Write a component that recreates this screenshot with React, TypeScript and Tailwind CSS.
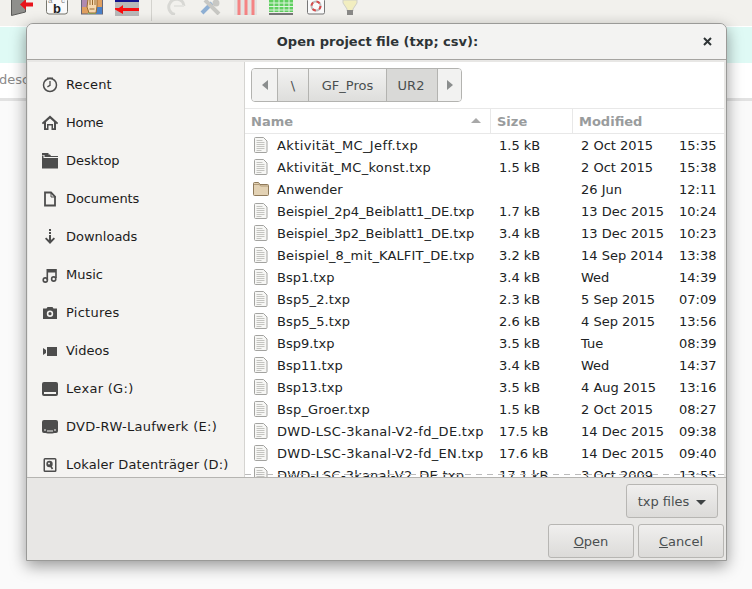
import { ReactNode } from "react";

const files = [
  ["Aktivität_MC_Jeff.txp", "1.5 kB", "2 Oct 2015", "15:35", "tracking-[0.38px]"],
  ["Aktivität_MC_konst.txp", "1.5 kB", "2 Oct 2015", "15:38", "tracking-[0.27px]"],
  ["Anwender", "", "26 Jun", "12:11", ""],
  ["Beispiel_2p4_Beiblatt1_DE.txp", "1.7 kB", "13 Dec 2015", "10:24", ""],
  ["Beispiel_3p2_Beiblatt1_DE.txp", "3.4 kB", "13 Dec 2015", "10:23", ""],
  ["Beispiel_8_mit_KALFIT_DE.txp", "3.2 kB", "14 Sep 2014", "13:38", "tracking-[0.14px]"],
  ["Bsp1.txp", "3.4 kB", "Wed", "14:39", ""],
  ["Bsp5_2.txp", "2.3 kB", "5 Sep 2015", "07:09", "tracking-[0.1px]"],
  ["Bsp5_5.txp", "2.6 kB", "4 Sep 2015", "13:56", "tracking-[0.1px]"],
  ["Bsp9.txp", "3.5 kB", "Tue", "08:39", ""],
  ["Bsp11.txp", "3.4 kB", "Wed", "14:37", ""],
  ["Bsp13.txp", "3.5 kB", "4 Aug 2015", "13:16", ""],
  ["Bsp_Groer.txp", "1.5 kB", "2 Oct 2015", "08:27", "tracking-[0.15px]"],
  ["DWD-LSC-3kanal-V2-fd_DE.txp", "17.5 kB", "14 Dec 2015", "09:38", "tracking-[0.3px]"],
  ["DWD-LSC-3kanal-V2-fd_EN.txp", "17.6 kB", "14 Dec 2015", "09:40", "tracking-[0.3px]"],
  ["DWD-LSC-3kanal-V2_DE.txp", "17.1 kB", "3 Oct 2009", "13:55", "tracking-[0.25px]"],
];

const Glyph = ({ children }: { children: ReactNode }) => (
  <svg width="16" height="16" viewBox="0 0 16 16" fill="#4d4d4d" className="shrink-0">
    {children}
  </svg>
);

const places: [string, string, ReactNode][] = [
  ["Recent", "tracking-[0.15px]", <Glyph><circle cx="8" cy="8" r="6.500" fill="none" stroke="#4d4d4d" strokeWidth="1.500" /><path d="M8 4v4.300l-2.600 1.600" fill="none" stroke="#4d4d4d" strokeWidth="1.300" /><path d="M5 .5h6v1.500H5z" /></Glyph>],
  ["Home", "tracking-[-0.3px]", <Glyph><path fillRule="evenodd" d="M8 .5-.2 8l1.200 1.300L2 8.400V15h4.500v-4.500h3V15H14V8.400l1 .9L16.200 8zM4 7l4-3.600L12 7v6.300h-1V9H5v4.300H4z" /></Glyph>],
  ["Desktop", "", <Glyph><path d="M0 0h6.500v2H0zM0 2.500h1.500V5H16v10.500H0z" /><path d="M2.500 1.500H8l1 1.500h7v1H2.500z" /></Glyph>],
  ["Documents", "tracking-[-0.1px]", <Glyph><path d="M3 1.500h6l4 4v9H3z" fill="none" stroke="#4d4d4d" strokeWidth="1.800" /><path d="M9 1v5h5" fill="none" stroke="#4d4d4d" strokeWidth="1" /></Glyph>],
  ["Downloads", "", <Glyph><path d="M7 0h2v2H7zM7 3h2v2H7zM7 6h2v5l2.800-2.500 1.200 1.300L8 15 3 9.800l1.200-1.300L7 11z" /></Glyph>],
  ["Music", "", <Glyph><path d="M4.500 2h10.300v9h-1.600V5.500H6.100V13H4.500z" /><circle cx="3.300" cy="13" r="2.100" fill="none" stroke="#4d4d4d" strokeWidth="1.600" /><circle cx="11.700" cy="12" r="2.100" fill="none" stroke="#4d4d4d" strokeWidth="1.600" /></Glyph>],
  ["Pictures", "tracking-[0.25px]", <Glyph><path fillRule="evenodd" d="M5.500 2h5l1 1.500H15V14H1V3.500h3.500zM8 5.500a3.200 3.200 0 1 0 0 6.400 3.200 3.200 0 0 0 0-6.400z" /><circle cx="8" cy="8.700" r="1.600" /></Glyph>],
  ["Videos", "", <Glyph><path d="M5 4h10v9H5zM1 5l3 2v3l-3 2z" /></Glyph>],
  ["Lexar (G:)", "tracking-[0.3px]", <Glyph><path fillRule="evenodd" d="M2 1h12a2 2 0 0 1 2 2v10a2 2 0 0 1-2 2H2a2 2 0 0 1-2-2V3a2 2 0 0 1 2-2zM2 11v2h12v-2z" /></Glyph>],
  ["DVD-RW-Laufwerk (E:)", "tracking-[0.3px]", <Glyph><path d="M2 1h12a2 2 0 0 1 2 2v9a2 2 0 0 1-2 2h-1.500a8 3 0 0 1-9 0H2a2 2 0 0 1-2-2V3a2 2 0 0 1 2-2z" /><path d="M2 10.500h2v1H2zM12 10.500h2v1h-2zM5 11.500h6v1H5z" fill="#f4f3f1" /></Glyph>],
  ["Lokaler Datenträger (D:)", "tracking-[0.13px]", <Glyph><path fillRule="evenodd" d="M3 1h10a1.500 1.500 0 0 1 1.500 1.500v11A1.500 1.500 0 0 1 13 15H3a1.500 1.500 0 0 1-1.500-1.500v-11A1.500 1.500 0 0 1 3 1zm0 1.500v11h10v-11z" /><circle cx="7.500" cy="7" r="3.200" /><path d="M8 8l2.500 4" stroke="#4d4d4d" strokeWidth="1.600" /><circle cx="7" cy="6.500" r="1" fill="#f4f3f1" /></Glyph>],
];

function FileIcon() {
  return (
    <svg width="16" height="16" viewBox="0 0 16 16" className="shrink-0">
      <path d="M2.500.5h8l3.500 3.500v10.500a1 1 0 0 1-1 1h-10.500a1 1 0 0 1-1-1v-13a1 1 0 0 1 1-1z" fill="#f7f7f5" stroke="#a3a3a0" />
      <path d="M3.500 3.500h6M3.500 5.500h8M3.500 7.500h8M3.500 9.500h8M3.500 11.500h8M3.500 13.500h5" stroke="#c4c4c0" />
    </svg>
  );
}

function FolderIcon() {
  return (
    <svg width="16" height="16" viewBox="0 0 16 16" className="shrink-0">
      <path d="M.5 2.500a1 1 0 0 1 1-1h4l1.500 2h7.500a1 1 0 0 1 1 1v9a1 1 0 0 1-1 1h-13a1 1 0 0 1-1-1z" fill="#e3d2b4" stroke="#8f7a5a" />
      <path d="M1 3.500h5.500l1 1.500H15" fill="none" stroke="#b09a78" />
    </svg>
  );
}

function Toolbar() {
  return (
    <div className="flex h-[26px] items-start overflow-hidden bg-[#f2f1ed] pl-[11px]">
      <svg width="23" height="16" viewBox="0 0 23 16" className="mr-[12px]">
        <path d="M.5-1h14v13l-14 3.500z" fill="#8f8f8c" stroke="#5a5a58" />
        <path d="M22 2.500h-7V-1l-6 5.500 6 5.500V6.500h7z" fill="#e8141c" />
      </svg>
      <svg width="22" height="15" viewBox="0 0 22 15" className="mr-[13px]">
        <rect x=".5" y="-2" width="21" height="16" rx="2.500" fill="#fafafa" stroke="#77776f" />
        <text x="2" y="3" fontSize="8" fill="#888" fontFamily="Liberation Sans">a</text>
        <text x="15" y="3" fontSize="8" fill="#888" fontFamily="Liberation Sans">c</text>
        <text x="7" y="13" fontSize="13" fontWeight="bold" fill="#222" fontFamily="Liberation Sans">b</text>
      </svg>
      <svg width="22" height="15" viewBox="0 0 22 15" className="mr-[12px]">
        <rect x=".5" y="-1" width="21" height="15" fill="#e0a060" stroke="#667" />
        <rect x="1" y="0" width="7" height="7" fill="#b08ab0" />
        <rect x="7" y="7" width="8" height="7" fill="#7cc47c" />
        <rect x="15" y="7" width="6" height="7" fill="#4a80c8" />
        <path d="M7 -1h9v7l-1 7H8L6 7z" fill="#f5d8b0" stroke="#9a6a30" />
        <path d="M9 0v5M11.500 0v5M14 0v5M8.500 9h5" stroke="#9a6a30" />
      </svg>
      <svg width="24" height="16" viewBox="0 0 24 16" className="mr-[12px]">
        <rect width="24" height="16" fill="#b8b8b8" />
        <rect width="24" height="2" fill="#14148c" />
        <path d="M0 8h24v3H8v3L0 9.500z" fill="#fb0d0d" />
        <path d="M8 5v3H4z" fill="#fb0d0d" />
      </svg>
      <div className="mr-[13px] h-[21px] w-px bg-[#d4d3ce]" />
      <svg width="21" height="15" viewBox="0 0 21 15" className="mr-[14px]">
        <path d="M19 6A7.500 7.500 0 0 0 5 3a7.500 7.500 0 0 0 5 11.500" fill="none" stroke="#d8d8d4" strokeWidth="3" />
        <path d="M9 6h10" stroke="#e4e4e0" strokeWidth="2" />
      </svg>
      <svg width="22" height="15" viewBox="0 0 22 15" className="mr-[12px]">
        <path d="M2 13 12 3" stroke="#8fb0d4" strokeWidth="4" />
        <path d="M5 0l14 14" stroke="#c8c8c4" strokeWidth="4" />
        <circle cx="16" cy="3" r="3.500" fill="#c8c8c4" />
      </svg>
      <svg width="23" height="16" viewBox="0 0 23 16" className="mr-[12px]">
        <rect width="23" height="15" fill="#e4e4e2" />
        <path d="M5 0v15M12 0v15M19 0v15" stroke="#f58484" strokeWidth="3" />
      </svg>
      <svg width="24" height="15" viewBox="0 0 24 15" className="mr-[14px]">
        <rect width="24" height="12" fill="#60d060" />
        <path d="M0 3h24M0 6.500h24M0 10h24M5 0v12M10 0v12M15 0v12M20 0v12" stroke="#dff3df" />
        <rect y="13" width="24" height="2" fill="#777" />
      </svg>
      <svg width="18" height="15" viewBox="0 0 18 15" className="mr-[17px]">
        <rect x=".5" y="-1" width="17" height="15" rx="1.500" fill="#fafafa" stroke="#777" />
        <circle cx="9" cy="6" r="4.500" fill="none" stroke="#bdbdbd" strokeWidth="2" />
        <circle cx="9" cy="6" r="4.500" fill="none" stroke="#d84a4a" strokeWidth="2" strokeDasharray="3.500 3.570" />
      </svg>
      <svg width="16" height="16" viewBox="0 0 16 16">
        <path d="M1 0h14v3l-4 6v2H5V9L1 3z" fill="#f2eec0" stroke="#cfcfc8" />
        <rect x="5" y="10" width="6" height="5" fill="#8a8a88" />
      </svg>
    </div>
  );
}

const segment = "bg-gradient-to-b from-[#f2f2f1] to-[#dededc]";
const footerButton = "rounded-[3px] border border-[#b7b6b3] bg-gradient-to-b from-[#f0efee] to-[#dcdbd9] pt-[2px] text-[#4a4f50]";

export default function App() {
  return (
    <div className="relative h-[589px] w-[752px] overflow-hidden bg-white font-['DejaVu_Sans',sans-serif] text-[13px] text-[#2e3436]">
      <Toolbar />
      <div className="mt-px h-[36px] bg-[#dffaf5]" />
      <div className="-ml-px h-[35px] bg-white pt-[7px] text-[#8a8a8a]">desc</div>
      <div className="h-[3px] bg-[#e2e2e2]" />
      <div className="h-[488px] bg-[#fafafa]" />

      <div className="absolute top-[23px] left-[26px] flex h-[538px] w-[701px] flex-col overflow-hidden rounded-t-[7px] border border-[#9a9a98] bg-[#e8e7e5] shadow-[0_5px_16px_rgba(0,0,0,0.4)]">
        <div className="relative flex h-[36px] shrink-0 items-center justify-center border-b border-[#a5a4a1] bg-[#f3f3f2] pl-[2px] font-bold">
          <span>Open project file (txp; csv):</span>
          <svg width="9" height="9" viewBox="0 0 9 9" className="absolute top-[13px] right-[14px]">
            <path d="M1 1l7 7M8 1 1 8" stroke="#2e3436" strokeWidth="2" />
          </svg>
        </div>
        <div className="flex h-[418px] shrink-0 border-b border-[#b5b4b1] pt-[2px] pr-[2px] pl-px">
          <div className="w-[217px] shrink-0 border-r border-[#d5d4d1] bg-[#f4f3f1] pt-[4px] text-[#1c1c1c]">
            {places.map(([label, spacing, icon]) => (
              <div key={label} className="flex h-[38px] items-center gap-[8px] pl-[14px]">
                {icon}
                <span className={`whitespace-nowrap ${spacing}`}>{label}</span>
              </div>
            ))}
          </div>
          <div className="relative min-w-0 flex-1 overflow-hidden bg-white">
            <div className="flex h-[47px] items-center border-b border-[#e8e8e8] pl-[6px]">
              <div className="flex h-[34px] items-stretch overflow-hidden rounded-[4px] border border-[#b3b3b0] text-[#4a4f50]">
                <div className="flex w-[26px] items-center justify-center border-r border-[#b3b3b0] bg-[#f2f2f1]">
                  <span className="h-0 w-0 border-y-[5px] border-r-[6px] border-y-transparent border-r-[#8b8e8e]" />
                </div>
                <div className={`flex w-[31px] items-center justify-center border-r border-[#b3b3b0] pt-[2px] ${segment}`}>\</div>
                <div className={`flex w-[78px] items-center justify-center border-r border-[#b3b3b0] pt-[2px] ${segment}`}>GF_Pros</div>
                <div className="flex w-[51px] items-center justify-center border-r border-[#b3b3b0] bg-[#d9d9d7] pt-[2px] pr-[2px]">UR2</div>
                <div className="flex w-[23px] items-center justify-center bg-[#f2f2f1]">
                  <span className="h-0 w-0 border-y-[5px] border-l-[6px] border-y-transparent border-l-[#8b8e8e]" />
                </div>
              </div>
            </div>
            <div className="flex h-[25px] items-center border-b border-[#e8e8e8] font-bold text-[#999c9d]">
              <div className="relative flex h-full w-[246px] items-center border-r border-[#e8e8e8] pt-[2px] pl-[6px]">
                Name
                <span className="absolute top-[9px] right-[9px] h-0 w-0 border-x-[5px] border-b-[5px] border-x-transparent border-b-[#a8a8a8]" />
              </div>
              <div className="flex h-full w-[82px] items-center border-r border-[#e8e8e8] pt-[2px] pl-[6px]">Size</div>
              <div className="pt-[2px] pl-[6px]">Modified</div>
            </div>
            {files.map(([name, size, date, time, spacing]) => (
              <div key={name} className="flex h-[22px] items-center whitespace-nowrap text-[#202324]">
                <div className="flex w-[246px] items-center gap-[8px] pl-[8px]">
                  {name === "Anwender" ? <FolderIcon /> : <FileIcon />}
                  <span className={`pt-[2px] ${spacing}`}>{name}</span>
                </div>
                <div className="w-[82px] pt-[2px] pl-[8px]">{size}</div>
                <div className="w-[106px] pt-[2px] pl-[8px]">{date}</div>
                <div className="pt-[2px]">{time}</div>
              </div>
            ))}
            <div className="absolute right-0 bottom-[2px] left-0 h-px bg-[repeating-linear-gradient(90deg,#bbbbbb_0,#bbbbbb_6px,transparent_6px,transparent_11px)]" />
          </div>
        </div>
        <div className="flex flex-1 flex-col items-end pt-[6px] pr-[2px]">
          <button type="button" className={`mr-[6px] flex h-[34px] w-[92px] items-center justify-center gap-[7px] ${footerButton}`}>
            txp files
            <span className="h-0 w-0 border-x-[5px] border-t-[5px] border-x-transparent border-t-[#3f4344]" />
          </button>
          <div className="mt-[6px] flex gap-[4px]">
            <button type="button" className={`h-[34px] w-[86px] ${footerButton}`}>
              <span className="underline">O</span>pen
            </button>
            <button type="button" className={`h-[34px] w-[86px] ${footerButton}`}>
              <span className="underline">C</span>ancel
            </button>
          </div>
        </div>
      </div>
    </div>
  );
}
